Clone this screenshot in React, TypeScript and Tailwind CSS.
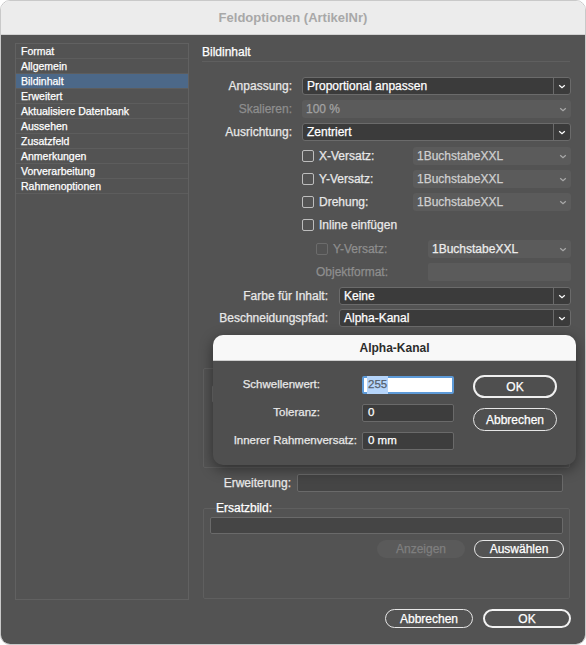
import React from "react";

const listItems = [
  "Format",
  "Allgemein",
  "Bildinhalt",
  "Erweitert",
  "Aktualisiere Datenbank",
  "Aussehen",
  "Zusatzfeld",
  "Anmerkungen",
  "Vorverarbeitung",
  "Rahmenoptionen",
];

function Chevron({ className }: { className?: string }) {
  return (
    <svg width="8" height="5" viewBox="0 0 8 5" className={className}>
      <path d="M1.2 1.2l2.8 2.6 2.8-2.6" fill="none" stroke="currentColor" strokeWidth="1.2" />
    </svg>
  );
}

function Select({ value, className }: { value: string; className: string }) {
  return (
    <div className={`flex h-[18px] items-center rounded-[3px] border border-[#6b6b6b] bg-[#3b3b3b] ${className}`}>
      <span className="flex-1 pl-[4px] text-white">{value}</span>
      <span className="flex h-full w-[17px] items-center justify-center border-l border-[#6b6b6b] text-white">
        <Chevron />
      </span>
    </div>
  );
}

function DimSelect({ value, className, text }: { value: string; className: string; text: string }) {
  return (
    <div className={`flex h-[18px] items-center rounded-[3px] bg-[#5b5b5b] ${className}`}>
      <span className={`flex-1 pl-[4px] ${text}`}>{value}</span>
      <span className="flex w-[17px] items-center justify-center text-[#a8a8a8]">
        <Chevron />
      </span>
    </div>
  );
}

function Box({ dim }: { dim?: boolean }) {
  return (
    <span
      className={`h-[12px] w-[12px] shrink-0 rounded-[2px] border ${
        dim ? "border-[#6c6c6c]" : "border-[#bdbdbd]"
      }`}
    />
  );
}

export default function App() {
  return (
    <div className="relative h-[645px] w-[586px] bg-white font-['Liberation_Sans',Arial,sans-serif] text-[12px] text-[#e8e8e8] [-webkit-text-stroke:0.25px_currentColor]">
      <div className="flex h-full flex-col overflow-hidden rounded-[10px] border border-[#c9c9c9]">
        {/* title bar */}
        <div className="flex h-[34px] shrink-0 items-center justify-center border-b border-[#d2d2d2] bg-[#ececec] text-[13px] font-bold text-[#a8a8a8] [-webkit-text-stroke:0]">
          Feldoptionen (ArtikelNr)
        </div>

        <div className="flex flex-1 flex-col bg-[#535353] pl-[14px] pr-[9px]">
          <div className="mt-[8px] flex h-[557px]">
            {/* left list */}
            <div className="w-[174px] border border-[#616161] text-[10.5px] text-white">
              {listItems.map((item) => (
                <div
                  key={item}
                  className={`h-[15px] border-b border-[#5d5d5d] pl-[5px] leading-[14px] ${
                    item === "Bildinhalt" ? "bg-[#4c6888]" : ""
                  }`}
                >
                  {item}
                </div>
              ))}
            </div>

            {/* right column */}
            <div className="ml-[7px] flex w-[380px] flex-col">
              <div className="mx-[6px] h-[19px] border-b border-[#5f5f5f] leading-[18px] text-[12px] text-white">
                Bildinhalt
              </div>

              <div className="mt-[15px] flex h-[18px] items-center">
                <span className="w-[96px] text-right">Anpassung:</span>
                <Select value="Proportional anpassen" className="ml-[10px] w-[269px]" />
              </div>
              <div className="mt-[5px] flex h-[18px] items-center">
                <span className="w-[96px] text-right text-[#8e8e8e]">Skalieren:</span>
                <DimSelect value="100 %" text="text-[#a2a2a2]" className="ml-[10px] w-[269px]" />
              </div>
              <div className="mt-[5px] flex h-[18px] items-center">
                <span className="w-[96px] text-right">Ausrichtung:</span>
                <Select value="Zentriert" className="ml-[10px] w-[269px]" />
              </div>

              {["X-Versatz:", "Y-Versatz:", "Drehung:"].map((l, i) => (
                <div key={l} className={`${i === 0 ? "mt-[6px]" : "mt-[5px]"} flex h-[18px] items-center pl-[106px] pr-[5px]`}>
                  <Box />
                  <span className="ml-[5px] flex-1">{l}</span>
                  <DimSelect value="1BuchstabeXXL" text="text-[#cfcfcf]" className="w-[158px]" />
                </div>
              ))}

              <div className="mt-[5px] flex h-[18px] items-center pl-[106px]">
                <Box />
                <span className="ml-[5px]">Inline einfügen</span>
              </div>

              <div className="mt-[6px] flex h-[18px] items-center pl-[120px] pr-[5px]">
                <Box dim />
                <span className="ml-[5px] flex-1 text-[#8e8e8e]">Y-Versatz:</span>
                <DimSelect value="1BuchstabeXXL" text="text-[#ececec]" className="w-[143px]" />
              </div>
              <div className="mt-[5px] flex h-[18px] items-center pl-[120px] pr-[5px]">
                <span className="flex-1 text-[#8e8e8e]">Objektformat:</span>
                <div className="h-[18px] w-[143px] rounded-[2px] bg-[#5b5b5b]" />
              </div>

              <div className="mt-[6px] flex h-[18px] items-center">
                <span className="w-[132px] text-right">Farbe für Inhalt:</span>
                <Select value="Keine" className="ml-[11px] w-[232px]" />
              </div>
              <div className="mt-[4px] flex h-[18px] items-center">
                <span className="w-[132px] text-right">Beschneidungspfad:</span>
                <Select value="Alpha-Kanal" className="ml-[11px] w-[232px]" />
              </div>

              {/* group hidden behind the dialog */}
              <div className="ml-[7px] mr-[6px] mt-[41px] h-[100px] rounded-[2px] border border-[#5f5f5f]">
                <div className="ml-[8px] mt-[16px] h-[18px] w-[300px] rounded-[2px] border border-[#6e6e6e] bg-[#4a4a4a]" />
              </div>

              <div className="mt-[6px] flex h-[18px] items-center">
                <span className="w-[95px] text-right">Erweiterung:</span>
                <div className="ml-[6px] h-[18px] w-[266px] rounded-[2px] border border-[#6a6a6a] bg-[#454545]" />
              </div>

              <fieldset className="ml-[7px] mr-[6px] mt-[9px] h-[98px] rounded-[2px] border border-[#5f5f5f]">
                <legend className="ml-[12px] leading-[14px] text-white">Ersatzbild:</legend>
                <div className="mx-[6px] mt-[2px] h-[17px] rounded-[2px] border border-[#6a6a6a] bg-[#454545]" />
                <div className="mt-[6px] flex justify-end gap-[9px] pr-[5px]">
                  <div className="flex h-[18px] w-[88px] items-center justify-center rounded-full bg-[#5a5a5a] text-[#7f7f7f]">
                    Anzeigen
                  </div>
                  <div className="flex h-[18px] w-[90px] items-center justify-center rounded-full border-[1.5px] border-[#e6e6e6] text-white">
                    Auswählen
                  </div>
                </div>
              </fieldset>
            </div>
          </div>

          <div className="mt-[9px] flex justify-end gap-[10px] pr-[5px]">
            <div className="flex h-[19px] w-[88px] items-center justify-center rounded-full border-[1.5px] border-[#e6e6e6] text-white">
              Abbrechen
            </div>
            <div className="flex h-[19px] w-[88px] items-center justify-center rounded-full border-2 border-[#f2f2f2] text-white">
              OK
            </div>
          </div>
        </div>
      </div>

      {/* Alpha-Kanal sheet */}
      <div className="absolute left-[213px] top-[335px] flex h-[130px] w-[363px] flex-col overflow-hidden rounded-[10px] bg-[#4f4f4f] shadow-[0_4px_14px_rgba(0,0,0,0.45)]">
        <div className="flex h-[26px] shrink-0 items-center justify-center border-b border-[#cfcfcf] bg-[#f8f8f8] text-[12px] font-bold text-[#2c2c2c] [-webkit-text-stroke:0]">
          Alpha-Kanal
        </div>
        <div className="flex text-[11.5px]">
          <div className="flex flex-col gap-[10px] pt-[15px]">
            <div className="flex h-[18px] items-center">
              <span className="w-[149px] pr-[42px] text-right">Schwellenwert:</span>
              <div className="flex h-[18px] w-[92px] items-center rounded-[2px] border-2 border-[#5d9ad8] bg-white pl-[3px]">
                <span className="bg-[#b5d5fb] px-[1px] text-[#56606c]">255</span>
              </div>
            </div>
            <div className="flex h-[18px] items-center">
              <span className="w-[149px] pr-[42px] text-right">Toleranz:</span>
              <div className="flex h-[18px] w-[92px] items-center rounded-[2px] border border-[#6a6a6a] bg-[#3d3d3d] pl-[5px] text-white">
                0
              </div>
            </div>
            <div className="flex h-[18px] items-center">
              <span className="w-[149px] whitespace-nowrap pr-[5px] text-right">Innerer Rahmenversatz:</span>
              <div className="flex h-[18px] w-[92px] items-center rounded-[2px] border border-[#6a6a6a] bg-[#3d3d3d] pl-[5px] text-white">
                0 mm
              </div>
            </div>
          </div>
          <div className="ml-[19px] flex flex-col gap-[10px] pt-[14px] text-[12px]">
            <div className="flex h-[23px] w-[84px] items-center justify-center rounded-full border-2 border-[#f0f0f0] text-white">
              OK
            </div>
            <div className="flex h-[23px] w-[84px] items-center justify-center rounded-full border-[1.5px] border-[#e6e6e6] text-white">
              Abbrechen
            </div>
          </div>
        </div>
      </div>
    </div>
  );
}
